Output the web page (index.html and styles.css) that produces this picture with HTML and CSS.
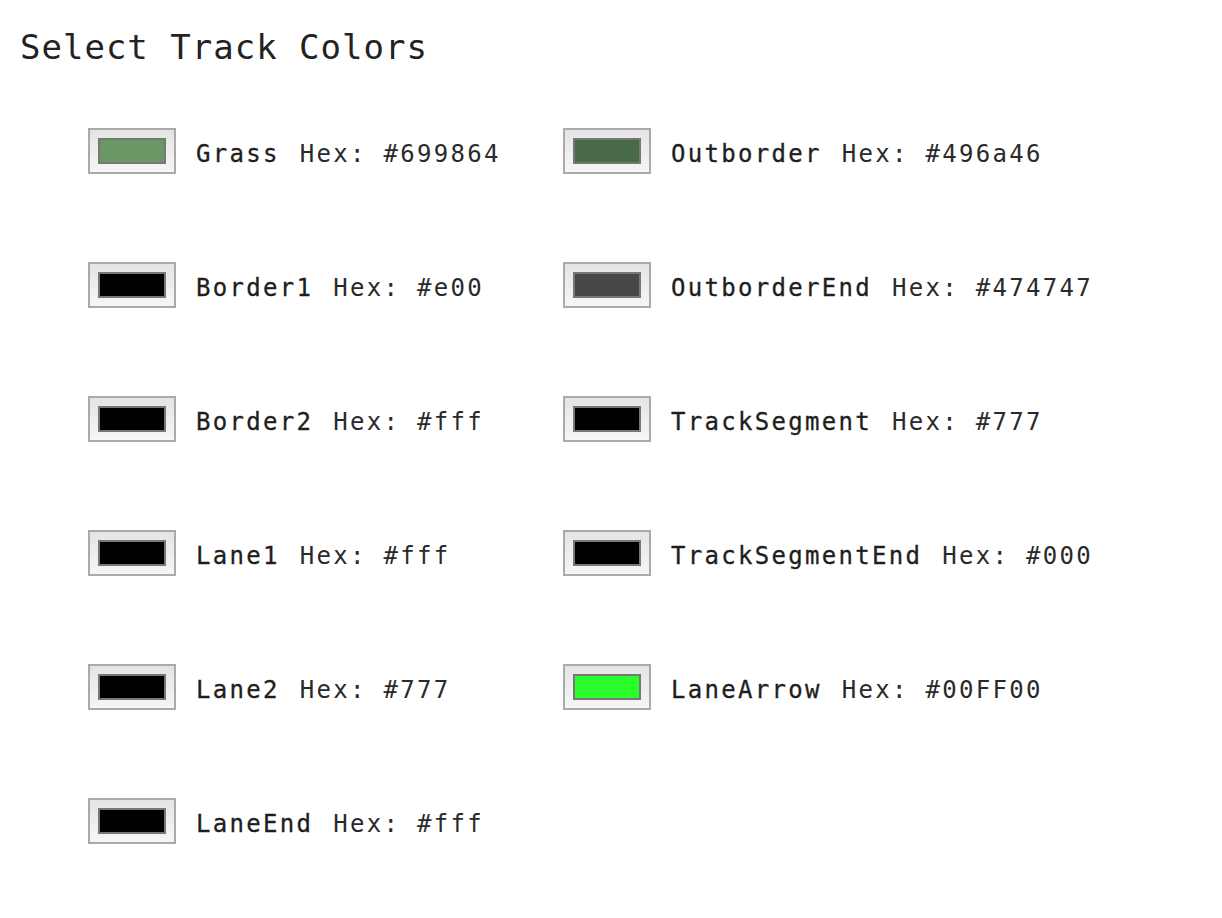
FILE: index.html
```html
<!DOCTYPE html>
<html>
<head>
<meta charset="utf-8">
<link rel="stylesheet" href="styles.css">
</head>
<body>
<h1 class="title">Select Track Colors</h1>
<div class="grid">
  <div class="item"><span class="well"><span class="swatch" style="background:#699864"></span></span><span class="name">Grass</span><span class="hex">Hex: #699864</span></div>
  <div class="item"><span class="well"><span class="swatch" style="background:#496a46"></span></span><span class="name">Outborder</span><span class="hex">Hex: #496a46</span></div>
  <div class="item"><span class="well"><span class="swatch" style="background:#000"></span></span><span class="name">Border1</span><span class="hex">Hex: #e00</span></div>
  <div class="item"><span class="well"><span class="swatch" style="background:#474747"></span></span><span class="name">OutborderEnd</span><span class="hex">Hex: #474747</span></div>
  <div class="item"><span class="well"><span class="swatch" style="background:#000"></span></span><span class="name">Border2</span><span class="hex">Hex: #fff</span></div>
  <div class="item"><span class="well"><span class="swatch" style="background:#000"></span></span><span class="name">TrackSegment</span><span class="hex">Hex: #777</span></div>
  <div class="item"><span class="well"><span class="swatch" style="background:#000"></span></span><span class="name">Lane1</span><span class="hex">Hex: #fff</span></div>
  <div class="item"><span class="well"><span class="swatch" style="background:#000"></span></span><span class="name">TrackSegmentEnd</span><span class="hex">Hex: #000</span></div>
  <div class="item"><span class="well"><span class="swatch" style="background:#000"></span></span><span class="name">Lane2</span><span class="hex">Hex: #777</span></div>
  <div class="item"><span class="well"><span class="swatch" style="background:#2bfd2b"></span></span><span class="name">LaneArrow</span><span class="hex">Hex: #00FF00</span></div>
  <div class="item"><span class="well"><span class="swatch" style="background:#000"></span></span><span class="name">LaneEnd</span><span class="hex">Hex: #fff</span></div>
</div>
</body>
</html>
```
FILE: styles.css
```css
html, body {
  margin: 0;
  padding: 0;
  background: #fff;
}
body {
  font-family: "DejaVu Sans Mono", "Liberation Mono", monospace;
  color: #222;
}
.title {
  margin: 0;
  padding: 27px 0 0 20px;
  font-size: 34px;
  font-weight: normal;
  letter-spacing: 1px;
  line-height: 40px;
  color: #222;
}
.grid {
  display: grid;
  grid-template-columns: 475px auto;
  row-gap: 88px;
  padding: 61px 0 0 88px;
}
.item {
  display: flex;
  align-items: center;
  height: 46px;
  font-size: 24px;
  letter-spacing: 2.3px;
}
.well {
  box-sizing: border-box;
  width: 88px;
  height: 46px;
  border: 2px solid #aaa;
  background: linear-gradient(#e4e4e4, #f6f6f6);
  padding: 8px;
  margin-right: 20px;
  display: flex;
  flex-shrink: 0;
}
.swatch {
  box-sizing: border-box;
  width: 68px;
  height: 26px;
  border: 2px solid #777;
}
.name, .hex {
  padding-top: 6px;
}
.name {
  color: #1e1e1e;
  margin-right: 20px;
  -webkit-text-stroke: 0.3px #1e1e1e;
}
.hex {
  color: #2a2a2a;
}
```
